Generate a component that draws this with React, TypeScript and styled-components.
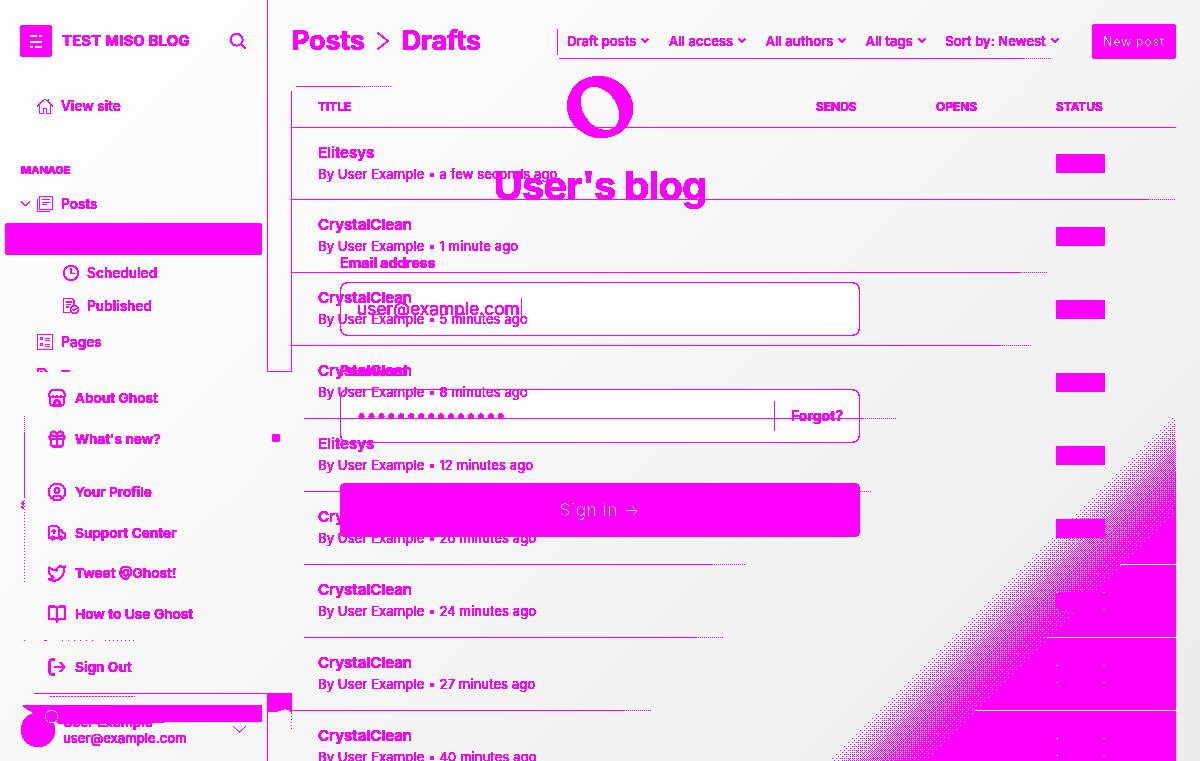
import React, { useMemo } from "react";
import styled, { createGlobalStyle } from "styled-components";
import { Gift, Store, CircleUser, Ambulance, Twitter, BookOpen, LogOut } from "lucide-react";

const M = "#ff00ff";
const PAGE_BG = "linear-gradient(135deg, #ffffff 0%, #f6f6f6 50%, #ebebeb 100%)";

const Global = createGlobalStyle`
  html, body { margin: 0; padding: 0; background: #fff; }
  body { font-family: Inter, "Liberation Sans", sans-serif; color: ${M}; }
  * { box-sizing: border-box; }
`;

const Root = styled.div`
  position: relative; width: 1200px; height: 761px; overflow: hidden;
  background: ${PAGE_BG}; filter: url(#crisp);
`;
const Defs = styled.svg`position: absolute; width: 0; height: 0;`;

/* login form, lying under the transparent admin page */
const LoginLayer = styled.section`
  position: absolute; inset: 0; display: flex; flex-direction: column; align-items: center; padding-top: 76px;
`;
const BlogTitle = styled.h1`
  margin: 23px 0 0; font-size: 40px; line-height: 48px; font-weight: 700; letter-spacing: -0.9px;
`;
const Form = styled.form`width: 520px; margin-top: 44px; display: flex; flex-direction: column;`;
const FieldLabel = styled.label`font-size: 14px; line-height: 18px; font-weight: 700; margin-top: ${p => p.$top}px;`;
const FieldBox = styled.div`
  height: 54px; margin-top: ${p => p.$gap}px; background: #fff; border: 1px solid ${M}; border-radius: 8px;
  display: flex; align-items: center; padding: 0 16px;
`;
const FieldValue = styled.span`font-size: 17.4px; line-height: 24px;`;
const Caret = styled.i`display: block; width: 1px; height: 23px; background: ${M}; margin-left: 1px;`;
const PasswordDots = styled.span`font-size: 20px; letter-spacing: 2.95px; margin-left: 1px; font-family: "Liberation Sans", sans-serif;`;
const FieldDivider = styled.i`display: block; width: 1px; height: 30px; background: ${M}; margin-left: auto;`;
const ForgotLink = styled.a`font-size: 14px; font-weight: 700; margin-left: 16px; margin-right: 1px; padding-bottom: 2px; width: 51px;`;
const SignInButton = styled.button`
  margin-top: 40px; height: 54px; border: 0; border-radius: 6px; background: ${M}; color: #fff;
  font: 400 17px Inter, sans-serif; letter-spacing: 0.6px;
`;

const Shell = styled.div`position: relative; display: flex; height: 100%;`;

/* sidebar */
const Sidebar = styled.aside`
  width: 268px; flex: none; height: 100%; border-right: 1px solid ${M}; display: flex; flex-direction: column; position: relative;
`;
const Brand = styled.header`display: flex; align-items: center; height: 32px; margin: 25px 21px 0 20px;`;
const BrandMark = styled.span`
  width: 32px; height: 32px; border-radius: 4px; background: ${M}; display: flex; align-items: center; justify-content: center; flex: none;
`;
const BrandName = styled.b`font-size: 15px; font-weight: 700; margin-left: 10px; letter-spacing: 0.1px; padding-bottom: 2px;`;
const SearchButton = styled.span`margin-left: auto; display: flex;`;
const NavRow = styled.div`
  display: flex; align-items: center; height: 32px; gap: 8px; font-size: 13.8px; font-weight: 500; padding-bottom: 1px;
  margin-top: ${p => p.$top || 0}px; padding-left: ${p => p.$indent || 37}px;
  position: relative;
  svg { flex: none; }
`;
const ActiveRow = styled(NavRow)`
  margin-left: 5px; margin-right: 5px; padding-left: 58px; background: ${M}; border-radius: 4px;
`;
const Expander = styled.span`position: absolute; left: 21px; top: 13px; display: flex;`;
const SectionLabel = styled.h4`
  margin: ${p => p.$top}px 0 0 21px; font-size: 11px; line-height: 14px; font-weight: 700; text-transform: uppercase;
`;
const UserFooter = styled.footer`
  position: relative; margin-top: auto; height: 46px; margin-bottom: 15px; padding-left: 63px; display: flex; flex-direction: column; justify-content: flex-end;
`;
const Avatar = styled.span`position: absolute; left: 21px; top: 13px; width: 34px; height: 34px; border-radius: 50%; background: ${M};`;
const AvatarRing = styled.span`
  position: absolute; left: 45.5px; top: 11px; width: 11px; height: 11px; border-radius: 50%; background: ${M}; box-shadow: 0 0 0 1.5px #fbfbfb;
`;
const UserName = styled.span`font-size: 13.5px; line-height: 16px; font-weight: 600;`;
const UserMail = styled.span`font-size: 13px; line-height: 16px; font-weight: 500;`;
const FooterChevron = styled.span`position: absolute; right: 21px; top: 26px; display: flex;`;
const FooterBar = styled.div`
  position: absolute; left: 23px; top: 5px; width: 239px; height: 19px; background: ${M};
  clip-path: polygon(0 0, 100% 0, 100% 86%, 99% 90%, 60% 90%, 45% 100%, 15% 100%, 14% 88%, 10% 50%, 7% 60%, 0 8%);
`;

/* main column */
const Main = styled.main`flex: 1; min-width: 0; padding: 24px 24px 0; display: flex; flex-direction: column;`;
const TopBar = styled.div`display: flex; align-items: center; height: 35px;`;
const Crumbs = styled.h2`
  margin: -2px 0 0; display: flex; align-items: center; font-size: 27px; font-weight: 700; letter-spacing: -0.2px; width: 264px; flex: none; line-height: 34px;
  svg { margin: 0 13px 0 12px; }
`;
const Filters = styled.div`
  position: relative; width: 496px; height: 35px; margin-right: 40px; flex: none; display: flex; align-items: center; padding: 0 0 2px 10px; gap: 19.5px;
  border-left: 1px solid transparent;
  background:
    linear-gradient(${M}, ${M}) no-repeat 2px 34px / 465px 1px,
    repeating-linear-gradient(90deg, ${M} 0 1px, transparent 1px 2px) no-repeat 467px 34px / 29px 1px,
    linear-gradient(${M}, ${M}) no-repeat 0 5px / 1px 26px;
`;
const Filter = styled.span`display: flex; align-items: center; gap: 5px; font-size: 13px; font-weight: 500; letter-spacing: 0.1px; white-space: nowrap;`;
const NewPost = styled.button`
  width: 84px; height: 35px; border: 0; border-radius: 4px; background: ${M}; color: #fff; flex: none;
  font: 600 12.5px Inter, sans-serif; letter-spacing: 0.6px;
`;
const Rule = styled.div`
  height: 1px; flex: none; margin-left: ${p => p.$start}px; width: ${p => p.$tail - p.$start}px;
  background:
    linear-gradient(${M}, ${M}) no-repeat 0 0 / ${p => p.$end - p.$start}px 1px,
    repeating-linear-gradient(90deg, ${M} 0 1px, transparent 1px 2px) no-repeat ${p => p.$end - p.$start}px 0;
`;
const TopRule = styled(Rule)`margin-top: 27px;`;
const Table = styled.div`
  margin: 4px 0 0 -1px; padding-left: 1px;
  background:
    linear-gradient(${M}, ${M}) no-repeat 0 0 / 1px 530px,
    repeating-linear-gradient(180deg, ${M} 0 1px, transparent 1px 3px) no-repeat 0 622px / 1px 18px;
`;
const Grid = styled.div`
  display: grid; grid-template-columns: 498px 120px 120px 1fr; padding-left: 26px;
`;
const HeadRow = styled(Grid)`height: 36px; align-items: center; padding-bottom: 6px; font-size: 12px; font-weight: 600; text-transform: uppercase;`;
const PostRow = styled(Grid)`height: ${p => (p.$first ? 71 : 72)}px; align-items: start;`;
const PostTitle = styled.div`font-size: 15px; line-height: 18px; font-weight: 600; margin-top: 16px;`;
const PostMeta = styled.div`font-size: 13px; line-height: 16px; font-weight: 400; letter-spacing: 0.13px; margin-top: 4px; white-space: nowrap;`;
const Badge = styled.span`
  grid-column: 4; width: 49px; height: 19px; margin-top: ${p => (p.$first ? 26 : 27)}px; background: ${M}; border-radius: 3px; font-size: 11px; line-height: 19px; text-align: center;
`;

/* dithered corner */
const CornerArt = styled.svg`position: absolute; left: 0; top: 0; pointer-events: none;`;

/* user menu */
const UserMenu = styled.nav`
  position: absolute; left: 24px; top: 372px; width: 268px; height: 321px; padding: 6px 12px 0 24px;
  background: ${PAGE_BG} fixed; display: flex; flex-direction: column;
  &::before { content: ""; position: absolute; left: 243px; top: -1px; width: 25px; height: 1px; background: ${M}; }
  &::after {
    content: ""; position: absolute; left: 0; top: 44px; width: 1px; height: 166px;
    background:
      repeating-linear-gradient(180deg, ${M} 0 1px, transparent 1px 2px) no-repeat 0 0 / 1px 16px,
      linear-gradient(${M}, ${M}) no-repeat 0 16px / 1px 66px,
      repeating-linear-gradient(180deg, ${M} 0 1px, transparent 1px 3px) no-repeat 0 84px / 1px 82px;
  }
`;
const MenuItem = styled.div`
  display: flex; align-items: center; gap: 10px; height: 40.5px; flex: none; font-size: 13.7px; font-weight: 600;
  margin-top: ${p => p.$top || 0}px;
  svg { flex: none; margin: 0 -1.5px; }
`;
const NewDot = styled.i`display: block; width: 8px; height: 8px; border-radius: 3px; background: ${M}; margin-left: auto; margin-top: -1px;`;
const MenuDots = styled.div`
  position: absolute; left: 0; top: 268px; width: 112px; height: 1px;
  background:
    linear-gradient(${M}, ${M}) no-repeat 0 0 / 1px 1px,
    linear-gradient(${M}, ${M}) no-repeat 20px 0 / 3px 1px,
    repeating-linear-gradient(90deg, ${M} 0 1px, transparent 1px 6px) no-repeat 38px 0 / 36px 1px,
    repeating-linear-gradient(90deg, ${M} 0 1px, transparent 1px 4px) no-repeat 81px 0 / 31px 1px;
`;
const MenuEdge = styled.div`
  position: absolute; left: 10px; bottom: -1px; width: 233px; height: 1px; background: ${M};
  &::after { content: ""; position: absolute; left: 16px; top: 3px; width: 85px; height: 1px;
    background: repeating-linear-gradient(90deg, ${M} 0 2px, transparent 2px 3px); }
`;
const MenuCorner = styled.div`
  position: absolute; left: 243px; top: 321px; width: 25px; height: 21px; background: ${M};
  clip-path: polygon(0 0, 100% 0, 100% 100%, 92% 82%, 70% 75%, 40% 88%, 0 90%);
`;

const BAYER = [
  [0, 32, 8, 40, 2, 34, 10, 42], [48, 16, 56, 24, 50, 18, 58, 26],
  [12, 44, 4, 36, 14, 46, 6, 38], [60, 28, 52, 20, 62, 30, 54, 22],
  [3, 35, 11, 43, 1, 33, 9, 41], [51, 19, 59, 27, 49, 17, 57, 25],
  [15, 47, 7, 39, 13, 45, 5, 37], [63, 31, 55, 23, 61, 29, 53, 21],
];

function DitherCorner() {
  const { ink, paper } = useMemo(() => {
    let ink = "", paper = "";
    const ruled = new Set([564, 637, 710]);
    for (let y = 416; y < 761; y++) {
      if (ruled.has(y)) { paper += `M${1684 - y} ${y}H1176v1H${1684 - y}z`; }
      let run = -1;
      for (let x = 820; x <= 1176; x++) {
        const t = (x + y - 1588) / 100;
        const on = x < 1176 && t > 0 && Math.pow(t, 0.8) > (BAYER[(y + 2) % 8][x % 8] + 0.5) / 64;
        if (on && run < 0) run = x;
        if (!on && run >= 0) { ink += `M${run} ${y}H${x}v1H${run}z`; run = -1; }
      }
    }
    for (const top of [591, 664, 737]) {
      for (const [x, y] of [[1057, top + 1], [1104, top + 1], [1057, top + 18], [1104, top + 18]]) {
        paper += `M${x - 1} ${y}h2v1h-2z`;
      }
    }
    return { ink, paper };
  }, []);
  return (
    <CornerArt width="1200" height="761" viewBox="0 0 1200 761" shapeRendering="crispEdges">
      <path d={ink} fill={M} />
      <path d={paper} fill="#fff" />
    </CornerArt>
  );
}

const MI = { size: 20, strokeWidth: 1.6 };

const SearchIcon = () => (
  <svg width="16" height="16" viewBox="0 0 16 16" fill="none" stroke={M} strokeWidth="1.2"><circle cx="6.7" cy="6.7" r="6" /><path d="M11 11l4.7 4.7" /></svg>
);
const HomeIcon = () => (
  <svg width="16" height="16" viewBox="0 0 16 16" fill="none" stroke={M} strokeWidth="1"><path d="M.5 8L8 1l7.5 7M2.5 6.5v9h4v-5h3v5h4v-9M11.5 1.5v2.5" /></svg>
);
const ClockIcon = () => (
  <svg width="16" height="16" viewBox="0 0 16 16" fill="none" stroke={M} strokeWidth="1.2"><circle cx="8" cy="8" r="7.2" /><path d="M8 3.5V8.5H12" /></svg>
);
const PostsIcon = () => (
  <svg width="16" height="16" viewBox="0 0 16 16" fill="none" stroke={M} strokeWidth="1" shapeRendering="crispEdges"><rect x="2.5" y=".5" width="13" height="13" /><path d="M.5 3v12.5H13M5 3.5h8M5 6.5h8M5 8.5h5" /></svg>
);
const PagesIcon = () => (
  <svg width="16" height="16" viewBox="0 0 16 16" fill="none" stroke={M} strokeWidth="1" shapeRendering="crispEdges"><rect x=".5" y=".5" width="15" height="15" /><rect x="3.5" y="3.5" width="2" height="2" /><rect x="3.5" y="9.5" width="2" height="2" /><path d="M8 4h5M8 6h5M8 10h5M8 12h5" /></svg>
);
const PublishedIcon = () => (
  <svg width="16" height="16" viewBox="0 0 16 16" fill="none" stroke={M} strokeWidth="1"><path d="M6.5 14.5H.5V.5h8.5l2 2v4M3 4h6M3 6.5h5M3 9h3" /><circle cx="11.5" cy="11.5" r="4" /><path d="M9.8 11.5l1.2 1.3 2.2-2.4" /></svg>
);
const TagsIcon = () => (
  <svg width="16" height="16" viewBox="0 0 16 16" fill="none" stroke={M} strokeWidth="1.2"><path d="M.8 1v6.5l7.7 7.7 6.5-6.5L7.3 1z" /><circle cx="4.5" cy="4.5" r="1" /></svg>
);
const BrandGlyph = () => (
  <svg width="12" height="13" viewBox="0 0 12 13" stroke="#fff" strokeWidth="2" fill="none" shapeRendering="crispEdges"><path d="M0 1h7M9 1h3M0 7h12M0 12h3M5 12h7" /></svg>
);
const TinyChevron = () => (
  <svg width="8" height="5" viewBox="0 0 8 5" fill="none" stroke={M} strokeWidth="1.5"><path d="M.8.8L4 4l3.2-3.2" /></svg>
);
const ThinChevron = () => (
  <svg width="9" height="6" viewBox="0 0 9 6" fill="none" stroke={M} strokeWidth="1"><path d="M.4.5L4.5 5 8.6.5" /></svg>
);
const FooterChevronIcon = () => (
  <svg width="13" height="7" viewBox="0 0 13 7" fill="none" stroke={M} strokeWidth="1"><path d="M.4.4l6.1 6 6.1-6" /></svg>
);
const CrumbChevron = () => (
  <svg width="12" height="18" viewBox="0 0 12 18" fill="none" stroke={M} strokeWidth="1.1"><path d="M.8.8L11 9 .8 17.2" /></svg>
);

const rows = [
  { name: "Elitesys", ago: "a few seconds ago", rule: [0, 856, 884] },
  { name: "CrystalClean", ago: "1 minute ago", rule: [0, 728, 756] },
  { name: "CrystalClean", ago: "5 minutes ago", rule: [0, 708, 740] },
  { name: "CrystalClean", ago: "8 minutes ago", rule: [12, 571, 605] },
  { name: "Elitesys", ago: "12 minutes ago", rule: [12, 568, 580] },
  { name: "CrystalClean", ago: "20 minutes ago", rule: [12, 420, 453] },
  { name: "CrystalClean", ago: "24 minutes ago", rule: [12, 404, 432] },
  { name: "CrystalClean", ago: "27 minutes ago", rule: [0, 332, 360] },
  { name: "CrystalClean", ago: "40 minutes ago", rule: [0, 0, 0] },
];

export default function App() {
  return (
    <>
      <Global />
      <Defs aria-hidden="true">
        <filter id="crisp" x="0" y="0" width="100%" height="100%" colorInterpolationFilters="sRGB">
          <feComponentTransfer>
            <feFuncG type="table" tableValues="0 0 0 0 0 0 0 0 0 0 0 0 0 0 0 0 0 0 0.9 0.95 1" />
          </feComponentTransfer>
        </filter>
      </Defs>
      <Root>
        <LoginLayer>
          <svg width="68" height="63" viewBox="0 0 68 63">
            <path fillRule="evenodd" fill={M} d="M3 19.7A33 30 20 1 1 65 42.3A33 30 20 1 1 3 19.7ZM20.2 12.8A24 17 55 1 0 47.8 52.2A24 17 55 1 0 20.2 12.8Z" />
          </svg>
          <BlogTitle>User's blog</BlogTitle>
          <Form>
            <FieldLabel $top={0}>Email address</FieldLabel>
            <FieldBox $gap={10}>
              <FieldValue>user@example.com</FieldValue>
              <Caret />
            </FieldBox>
            <FieldLabel $top={26}>Password</FieldLabel>
            <FieldBox $gap={9}>
              <PasswordDots>•••••••••••••••</PasswordDots>
              <FieldDivider />
              <ForgotLink>Forgot?</ForgotLink>
            </FieldBox>
            <SignInButton type="button">Sign in →</SignInButton>
          </Form>
        </LoginLayer>

        <Shell>
          <Sidebar>
            <Brand>
              <BrandMark><BrandGlyph /></BrandMark>
              <BrandName>TEST MISO BLOG</BrandName>
              <SearchButton><SearchIcon /></SearchButton>
            </Brand>
            <NavRow $top={33}><HomeIcon />View site</NavRow>
            <SectionLabel $top={41}>Manage</SectionLabel>
            <NavRow $top={11}>
              <Expander><ThinChevron /></Expander>
              <PostsIcon />Posts
            </NavRow>
            <ActiveRow $top={3}>Drafts</ActiveRow>
            <NavRow $top={2} $indent={63}><ClockIcon />Scheduled</NavRow>
            <NavRow $top={1} $indent={63}><PublishedIcon />Published</NavRow>
            <NavRow $top={4}><PagesIcon />Pages</NavRow>
            <NavRow $top={2}><TagsIcon />Tags</NavRow>
            <NavRow $top={6}><CircleUser size={16} strokeWidth={1.5} color={M} />Members</NavRow>
            <SectionLabel $top={68}>Settings</SectionLabel>
            <UserFooter>
              <UserName>User Example</UserName>
              <UserMail>user@example.com</UserMail>
              <FooterBar />
              <Avatar />
              <AvatarRing />
              <FooterChevron><FooterChevronIcon /></FooterChevron>
            </UserFooter>
          </Sidebar>

          <Main>
            <TopBar>
              <Crumbs>Posts<CrumbChevron />Drafts</Crumbs>
              <Filters>
                <Filter>Draft posts<TinyChevron /></Filter>
                <Filter>All access<TinyChevron /></Filter>
                <Filter>All authors<TinyChevron /></Filter>
                <Filter>All tags<TinyChevron /></Filter>
                <Filter>Sort by: Newest<TinyChevron /></Filter>
              </Filters>
              <NewPost type="button">New post</NewPost>
            </TopBar>
            <TopRule $start={4} $end={68} $tail={100} />
            <Table>
              <HeadRow>
                <span>Title</span>
                <span>Sends</span>
                <span>Opens</span>
                <span>Status</span>
              </HeadRow>
              <Rule $start={0} $end={884} $tail={884} />
              {rows.map((r, i) => (
                <React.Fragment key={i}>
                  <PostRow $first={i === 0}>
                    <div>
                      <PostTitle>{r.name}</PostTitle>
                      <PostMeta>By User Example • {r.ago}</PostMeta>
                    </div>
                    <Badge $first={i === 0}>Draft</Badge>
                  </PostRow>
                  <Rule $start={r.rule[0]} $end={r.rule[1]} $tail={r.rule[2]} />
                </React.Fragment>
              ))}
            </Table>
          </Main>
        </Shell>

        <DitherCorner />

        <UserMenu>
          <MenuItem><Store {...MI} color={M} />About Ghost</MenuItem>
          <MenuItem><Gift {...MI} color={M} />What's new?<NewDot /></MenuItem>
          <MenuItem $top={13}><CircleUser {...MI} color={M} />Your Profile</MenuItem>
          <MenuItem><Ambulance {...MI} color={M} />Support Center</MenuItem>
          <MenuItem><Twitter {...MI} color={M} />Tweet @Ghost!</MenuItem>
          <MenuItem><BookOpen {...MI} color={M} />How to Use Ghost</MenuItem>
          <MenuItem $top={13}><LogOut {...MI} color={M} />Sign Out</MenuItem>
          <MenuDots />
          <MenuEdge />
          <MenuCorner />
        </UserMenu>
      </Root>
    </>
  );
}
